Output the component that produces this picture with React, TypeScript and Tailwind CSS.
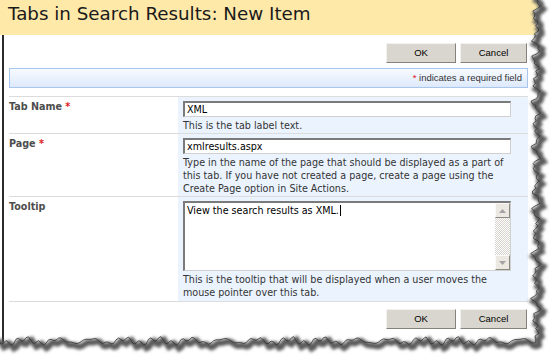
import React from "react";

const ui = "font-['DejaVu_Sans',Verdana,sans-serif]";
const narrow = "font-['Liberation_Sans',Tahoma,Arial,sans-serif]";

function Button({ label, className }: { label: string; className: string }) {
  return (
    <button
      type="button"
      className={`${className} h-[20px] ${narrow} text-[9.5px] text-black bg-[#d9d6cf] border border-t-[#f3f2ee] border-l-[#f3f2ee] border-r-[#85827b] border-b-[#85827b]`}
    >
      {label}
    </button>
  );
}

function Buttons() {
  return (
    <div className="flex justify-end gap-[4px] pr-[1px]">
      <Button label="OK" className="w-[70px]" />
      <Button label="Cancel" className="w-[67px]" />
    </div>
  );
}

function Row({
  label,
  required,
  height,
  children,
}: {
  label: string;
  required?: boolean;
  height: string;
  children: React.ReactNode;
}) {
  return (
    <div className={`flex border-t border-[#dcdcdc] ${height}`}>
      <div className="w-[169px] pt-[3px] text-[9.6px] leading-[13px] font-bold text-[#4d4d4d]">
        {label}
        {required && <span className="text-[#e0201c]"> *</span>}
      </div>
      <div className="flex-1 bg-[#ebf3ff] pl-[5px] pt-[4px]">{children}</div>
    </div>
  );
}

function TextBox({ value }: { value: string }) {
  return (
    <div className="w-[328px] h-[16px] bg-white border-t-2 border-l-2 border-[#7a7a7a] border-r border-b border-r-[#d0d0d0] border-b-[#d0d0d0] pl-[2px] text-[9.6px] leading-[13px] text-black">
      {value}
    </div>
  );
}

function Help({ lines }: { lines: string[] }) {
  return (
    <div className="mt-[2px] text-[9.6px] leading-[13px] text-[#333] whitespace-nowrap">
      {lines.map((l) => (
        <div key={l}>{l}</div>
      ))}
    </div>
  );
}

function ScrollArrow({ up }: { up?: boolean }) {
  return (
    <div className="w-[15px] h-[15px] bg-[#ece9e2] border border-t-[#fafafa] border-l-[#fafafa] border-r-[#8c8a85] border-b-[#8c8a85] flex items-center justify-center">
      <svg width="7" height="4" viewBox="0 0 7 4">
        <path d={up ? "M0 4 L3.5 0 L7 4 Z" : "M0 0 L3.5 4 L7 0 Z"} fill="#a3a3a3" />
      </svg>
    </div>
  );
}

// torn paper edge along the right and bottom
function TornEdge() {
  const pts: [number, number][] = [];
  for (let y = -4; y <= 339; y += 2.5) {
    const x =
      536 +
      2.6 * Math.sin(y * 0.29) +
      1.8 * Math.sin(y * 0.83 + 2) +
      1.2 * Math.sin(y * 2.1 + 0.5);
    pts.push([x, y]);
  }
  for (let x = 536; x >= -4; x -= 2.5) {
    const y =
      341 +
      2.3 * Math.sin(x * 0.19) +
      1.7 * Math.sin(x * 0.57 + 1) +
      1.1 * Math.sin(x * 1.9);
    pts.push([x, y]);
  }
  const line = pts
    .map(([x, y], i) => `${i ? "L" : "M"}${x.toFixed(1)} ${y.toFixed(1)}`)
    .join(" ");
  const outside = `${line} L-4 361 L558 361 L558 -4 Z`;

  return (
    <svg className="absolute inset-0 pointer-events-none" width="554" height="357">
      <defs>
        <filter id="tear" x="-5%" y="-5%" width="110%" height="110%">
          <feGaussianBlur stdDeviation="1.5" />
        </filter>
      </defs>
      <path d={outside} fill="#fff" />
      <path
        d={line}
        fill="none"
        stroke="#5c5c5c"
        strokeWidth="6"
        transform="translate(3 3)"
        filter="url(#tear)"
      />
      <path d={line} fill="none" stroke="#333" strokeWidth="0.8" />
    </svg>
  );
}

export default function App() {
  return (
    <div className={`relative w-[554px] h-[357px] overflow-hidden bg-white ${ui}`}>
      <div className="h-[35px] bg-[#fee9a9] pl-[8px] text-[18.3px] leading-[27px] text-[#1a1a1a]">
        Tabs in Search Results: New Item
      </div>

      <div className="ml-[2px] w-[526px] h-[322px] border-l-2 border-[#2b2b2b] pl-[5px] pt-[8px]">
        <Buttons />

        <div className="mt-[5px] h-[20px] flex items-center justify-end pr-[5px] border border-[#a8c6ee] bg-gradient-to-b from-[#f7faff] to-[#dde9fb]">
          <span className={`${narrow} text-[9.5px] text-[#333]`}>
            <span className="text-[#e0201c]">*</span> indicates a required field
          </span>
        </div>

        <div className="mt-[8px] border-b border-[#dcdcdc]">
          <Row label="Tab Name" required height="h-[37px]">
            <TextBox value="XML" />
            <Help lines={["This is the tab label text."]} />
          </Row>

          <Row label="Page" required height="h-[63px]">
            <TextBox value="xmlresults.aspx" />
            <Help
              lines={[
                "Type in the name of the page that should be displayed as a part of",
                "this tab. If you have not created a page, create a page using the",
                "Create Page option in Site Actions.",
              ]}
            />
          </Row>

          <Row label="Tooltip" height="h-[105px]">
            <div className="w-[328px] h-[70px] flex bg-white border-t-2 border-l-2 border-[#7a7a7a] border-r border-b border-r-[#d0d0d0] border-b-[#d0d0d0]">
              <div className="flex-1 pl-[2px] pt-[1px] text-[9.6px] leading-[13px] text-black">
                View the search results as XML.
                <span className="inline-block w-px h-[11px] bg-black align-[-2px] ml-px" />
              </div>
              <div className="w-[15px] flex flex-col bg-[repeating-conic-gradient(#d6d3cc_0_25%,#ffffff_0_50%)] bg-[length:2px_2px]">
                <ScrollArrow up />
                <div className="flex-1" />
                <ScrollArrow />
              </div>
            </div>
            <Help
              lines={[
                "This is the tooltip that will be displayed when a user moves the",
                "mouse pointer over this tab.",
              ]}
            />
          </Row>
        </div>

        <div className="mt-[7px]">
          <Buttons />
        </div>
      </div>

      <TornEdge />
    </div>
  );
}
